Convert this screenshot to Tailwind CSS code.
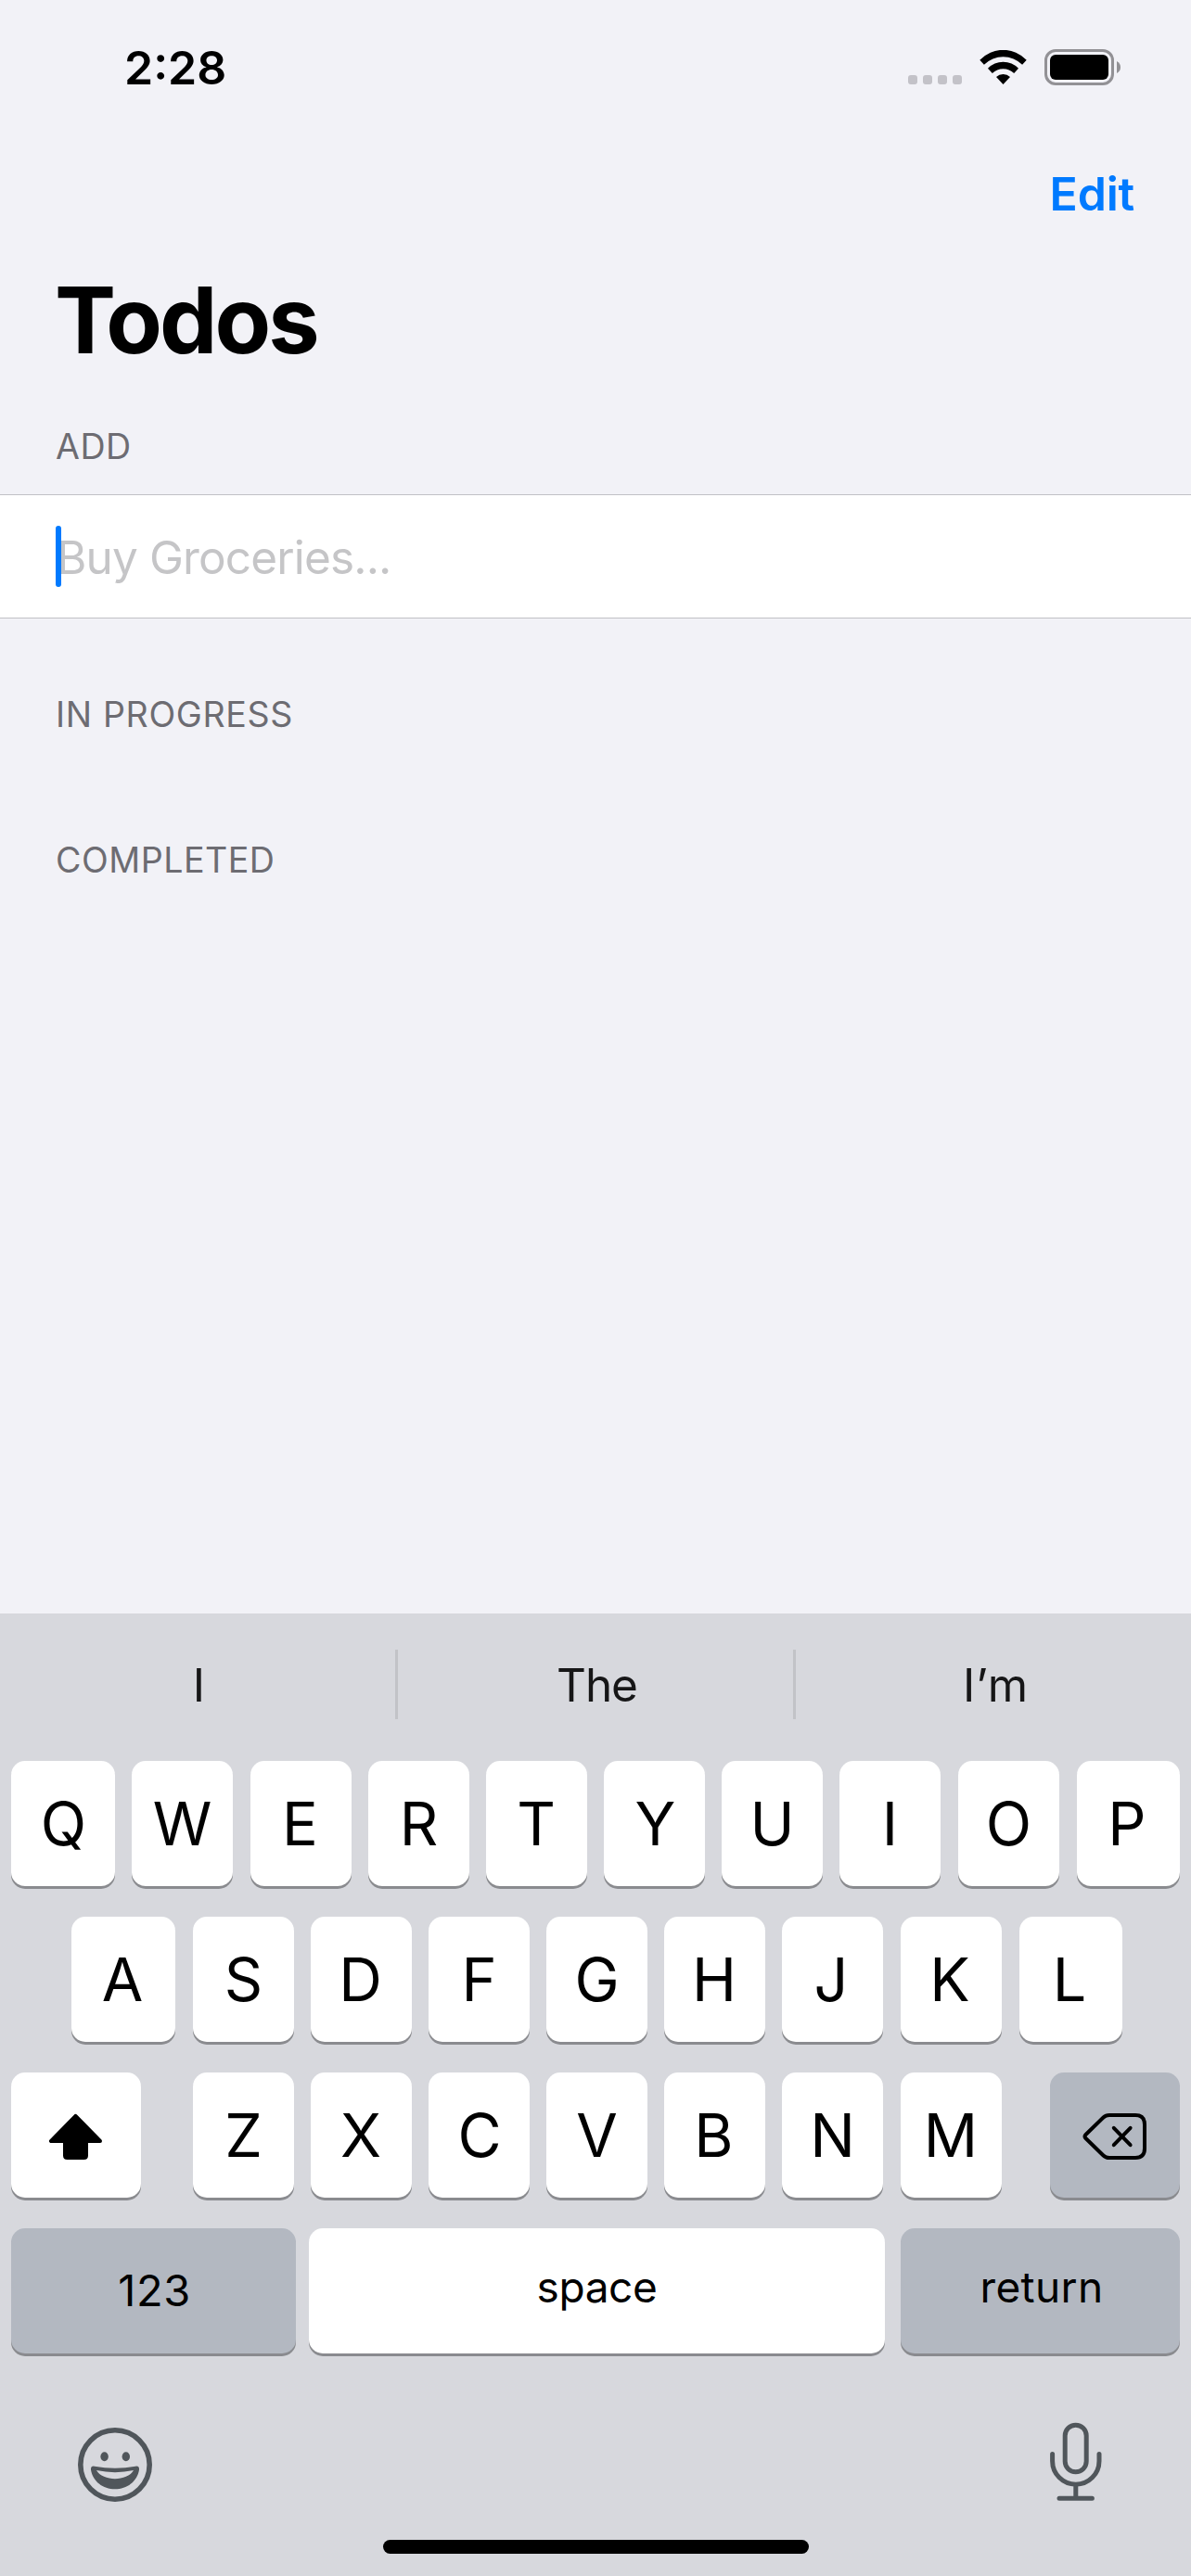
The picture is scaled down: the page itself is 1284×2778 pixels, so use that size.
<!DOCTYPE html>
<html lang="en">
<head>
<meta charset="utf-8">
<title>Todos</title>
<script src="https://cdn.jsdelivr.net/npm/@tailwindcss/browser@4"></script>
</head>
<body class="font-['Inter','Liberation_Sans',sans-serif] bg-[#f2f2f7] text-black">
<div class="flex h-[2778px] w-[1284px] flex-col overflow-hidden bg-[#f2f2f7]">

  <!-- Status bar -->
  <header class="flex h-[145px] items-center justify-between pl-[134px] pr-[76px]">
    <span class="text-[50px] leading-none font-semibold">2:28</span>
    <div class="flex items-start">
      <div class="mt-[28px] flex gap-[6px]">
        <i class="size-[10px] rounded-[3px] bg-[#c3c2c8]"></i>
        <i class="size-[10px] rounded-[3px] bg-[#c3c2c8]"></i>
        <i class="size-[10px] rounded-[3px] bg-[#c3c2c8]"></i>
        <i class="size-[10px] rounded-[3px] bg-[#c3c2c8]"></i>
      </div>
      <svg class="mt-px ml-[19px] h-[37px] w-[51px]" viewBox="0 0 51 37">
        <path d="M.3 10.8A34.4 34.4 0 0 1 50.7 10.8L46.1 15.8A29 29 0 0 0 4.9 15.8Z"/>
        <path d="M9 19.8A22.8 22.8 0 0 1 42 19.8L37.2 25A17 17 0 0 0 13.8 25Z"/>
        <path d="M18 29A11 11 0 0 1 33 29L25.5 37Z"/>
      </svg>
      <div class="ml-[19px] h-[39px] w-[75px] rounded-[12px] border-3 border-[#929195] p-[3px]">
        <div class="h-full w-full rounded-[6px] bg-black"></div>
      </div>
      <svg class="mt-[13px] ml-[3px] h-[13px] w-[4px]" viewBox="0 0 4 13"><path fill="#929195" d="M0 0Q4 2.2 4 6.5T0 13Z"/></svg>
    </div>
  </header>

  <!-- Navigation bar -->
  <nav class="flex h-[126px] items-center justify-end pt-px pr-[61px]">
    <button class="text-[50px] leading-none font-semibold tracking-[-0.2px] text-[#007aff]">Edit</button>
  </nav>
  <h1 class="flex h-[148px] items-center pl-[59px] text-[99px] leading-none font-bold tracking-[-3px]">Todos</h1>

  <!-- List sections -->
  <h2 class="flex h-[114px] items-center pt-[12px] pl-[60px] text-[37.6px] leading-none tracking-[0.5px] text-[#6d6c72]">ADD</h2>
  <div class="relative flex h-[134px] items-center border-y border-[#c1c1c5] bg-white pt-[4px] pl-[61px]">
    <span class="text-[49.5px] leading-none tracking-[-0.85px] text-[#c5c5c7]">Buy Groceries...</span>
    <div class="absolute top-[33px] left-[60px] h-[66px] w-[6px] rounded-full bg-[#007aff]"></div>
  </div>
  <h2 class="flex h-[206px] items-center pt-[2px] pl-[60px] text-[37.6px] leading-none tracking-[0.65px] text-[#6d6c72]">IN PROGRESS</h2>
  <h2 class="flex h-[109px] items-center pl-[60px] text-[37.6px] leading-none tracking-[0.5px] text-[#6d6c72]">COMPLETED</h2>

  <!-- Keyboard -->
  <section class="mt-auto flex h-[1038px] flex-col bg-[#d7d8dd]">
    <div class="flex h-[153px] items-center text-[49.5px] leading-none text-[#161617]">
      <span class="w-[426px] pt-[2px] pl-[3px] text-center">I</span>
      <i class="h-[75px] w-[3px] bg-[#c2c3c7]"></i>
      <span class="w-[426px] pt-[2px] pl-[3px] text-center tracking-[-1.1px]">The</span>
      <i class="h-[75px] w-[3px] bg-[#c2c3c7]"></i>
      <span class="w-[426px] pt-[2px] pl-[5px] text-center tracking-[0.9px]">I’m</span>
    </div>

    <div class="mt-[6px] flex flex-col gap-[33px] px-[12px] text-[64.6px] leading-none">
      <div class="flex gap-[18px] [&>div]:pt-[2px]">
        <div class="flex h-[135px] w-[112px] items-center justify-center rounded-[15px] bg-white pl-px shadow-[0_3px_0_#8a8b8f]">Q</div>
        <div class="flex h-[135px] w-[109px] items-center justify-center rounded-[15px] bg-white shadow-[0_3px_0_#8a8b8f]">W</div>
        <div class="ml-px flex h-[135px] w-[109px] items-center justify-center rounded-[15px] bg-white pr-[2px] shadow-[0_3px_0_#8a8b8f]">E</div>
        <div class="flex h-[135px] w-[109px] items-center justify-center rounded-[15px] bg-white shadow-[0_3px_0_#8a8b8f]">R</div>
        <div class="flex h-[135px] w-[109px] items-center justify-center rounded-[15px] bg-white pr-px shadow-[0_3px_0_#8a8b8f]">T</div>
        <div class="flex h-[135px] w-[109px] items-center justify-center rounded-[15px] bg-white pl-[2px] shadow-[0_3px_0_#8a8b8f]">Y</div>
        <div class="flex h-[135px] w-[109px] items-center justify-center rounded-[15px] bg-white shadow-[0_3px_0_#8a8b8f]">U</div>
        <div class="flex h-[135px] w-[109px] items-center justify-center rounded-[15px] bg-white shadow-[0_3px_0_#8a8b8f]">I</div>
        <div class="ml-px flex h-[135px] w-[109px] items-center justify-center rounded-[15px] bg-white shadow-[0_3px_0_#8a8b8f]">O</div>
        <div class="ml-px flex h-[135px] w-[111px] items-center justify-center rounded-[15px] bg-white pr-[3px] shadow-[0_3px_0_#8a8b8f]">P</div>
      </div>

      <div class="flex gap-[18px] pl-[65px] [&>div]:pt-[2px]">
        <div class="flex h-[135px] w-[112px] items-center justify-center rounded-[15px] bg-white pr-[2px] shadow-[0_3px_0_#8a8b8f]">A</div>
        <div class="ml-px flex h-[135px] w-[109px] items-center justify-center rounded-[15px] bg-white shadow-[0_3px_0_#8a8b8f]">S</div>
        <div class="flex h-[135px] w-[109px] items-center justify-center rounded-[15px] bg-white pr-[2px] shadow-[0_3px_0_#8a8b8f]">D</div>
        <div class="flex h-[135px] w-[109px] items-center justify-center rounded-[15px] bg-white shadow-[0_3px_0_#8a8b8f]">F</div>
        <div class="flex h-[135px] w-[109px] items-center justify-center rounded-[15px] bg-white shadow-[0_3px_0_#8a8b8f]">G</div>
        <div class="flex h-[135px] w-[109px] items-center justify-center rounded-[15px] bg-white pr-px shadow-[0_3px_0_#8a8b8f]">H</div>
        <div class="flex h-[135px] w-[109px] items-center justify-center rounded-[15px] bg-white pr-[3px] shadow-[0_3px_0_#8a8b8f]">J</div>
        <div class="ml-px flex h-[135px] w-[109px] items-center justify-center rounded-[15px] bg-white pr-[3px] shadow-[0_3px_0_#8a8b8f]">K</div>
        <div class="ml-px flex h-[135px] w-[111px] items-center justify-center rounded-[15px] bg-white pr-[3px] shadow-[0_3px_0_#8a8b8f]">L</div>
      </div>

      <div class="flex justify-between">
        <div class="flex h-[135px] w-[140px] items-center justify-center rounded-[15px] bg-white shadow-[0_3px_0_#8a8b8f]">
          <svg class="mt-[3px] h-[52px] w-[60px]" viewBox="0 0 60 52"><path stroke="#000" stroke-width="4" stroke-linejoin="round" d="M29.5 3.8L3 31H18V46.5Q18 49 20.5 49H38.5Q41 49 41 46.5V31H56Z"/></svg>
        </div>
        <div class="ml-[4px] flex gap-[18px] [&>div]:pt-[2px]">
          <div class="flex h-[135px] w-[109px] items-center justify-center rounded-[15px] bg-white shadow-[0_3px_0_#8a8b8f]">Z</div>
          <div class="flex h-[135px] w-[109px] items-center justify-center rounded-[15px] bg-white pr-px shadow-[0_3px_0_#8a8b8f]">X</div>
          <div class="flex h-[135px] w-[109px] items-center justify-center rounded-[15px] bg-white pl-px shadow-[0_3px_0_#8a8b8f]">C</div>
          <div class="flex h-[135px] w-[109px] items-center justify-center rounded-[15px] bg-white shadow-[0_3px_0_#8a8b8f]">V</div>
          <div class="flex h-[135px] w-[109px] items-center justify-center rounded-[15px] bg-white pr-[2px] shadow-[0_3px_0_#8a8b8f]">B</div>
          <div class="flex h-[135px] w-[109px] items-center justify-center rounded-[15px] bg-white shadow-[0_3px_0_#8a8b8f]">N</div>
          <div class="ml-px flex h-[135px] w-[109px] items-center justify-center rounded-[15px] bg-white pr-px shadow-[0_3px_0_#8a8b8f]">M</div>
        </div>
        <div class="flex h-[135px] w-[140px] items-center justify-center rounded-[15px] bg-[#b3b8c1] shadow-[0_3px_0_#8a8b8f]">
          <svg class="mt-[3px] h-[52px] w-[72px]" viewBox="0 0 72 52" fill="none" stroke="#000" stroke-width="4" stroke-linecap="round" stroke-linejoin="round">
            <path d="M30 3H58Q68 3 68 13V39Q68 49 58 49H30Q26 49 23.5 46.5L4.5 28Q2.6 26 4.5 24L23.5 5.5Q26 3 30 3Z"/>
            <path d="M34.8 16.8L52.6 35.2M52.6 16.8L34.8 35.2"/>
          </svg>
        </div>
      </div>

      <div class="flex text-[46px]">
        <div class="flex h-[135px] w-[307px] items-center justify-center rounded-[15px] bg-[#b3b8c1] pb-[2px] pl-[2px] text-[47px] tracking-[0.6px] shadow-[0_3px_0_#8a8b8f]">123</div>
        <div class="ml-[14px] flex h-[135px] w-[621px] items-center justify-center rounded-[15px] bg-white pb-[10px] tracking-[-0.4px] shadow-[0_3px_0_#8a8b8f]">space</div>
        <div class="ml-[17px] flex h-[135px] w-[301px] items-center justify-center rounded-[15px] bg-[#b3b8c1] pb-[10px] pl-[3px] tracking-[0.37px] shadow-[0_3px_0_#8a8b8f]">return</div>
      </div>
    </div>

    <div class="mt-[74px] flex items-start justify-between pr-[96px] pl-[84px]">
      <svg class="mt-[6px] size-[80px]" viewBox="0 0 80 80" fill="#50565b">
        <circle cx="40" cy="40" r="37.2" fill="none" stroke="#50565b" stroke-width="5.6"/>
        <ellipse cx="28.6" cy="31.3" rx="4.2" ry="5"/>
        <ellipse cx="51.8" cy="31.3" rx="4.2" ry="5"/>
        <path fill-rule="evenodd" d="M18 41.7Q40 46 62 41.7Q66.5 41 66 45.5C64 58 53 66.3 40 66.3C27 66.3 16 58 14 45.5Q13.5 41 18 41.7ZM20 46C23 52 32 55.2 40 55.2C48 55.2 57 52 60 46Q40 50.3 20 46Z"/>
      </svg>
      <svg class="h-[86px] w-[56px]" viewBox="0 0 56 86" fill="none" stroke="#50565b" stroke-width="5" stroke-linecap="round">
        <rect x="16.2" y="3.2" width="23" height="50.6" rx="11.5"/>
        <path d="M2.6 34.5V42A25.2 25.2 0 0 0 53 42V34.5M27.8 67.5V82M10 82.3H45.4"/>
      </svg>
    </div>

    <!-- Home indicator -->
    <div class="mt-[41px] ml-[413px] h-[15px] w-[459px] rounded-full bg-black"></div>
  </section>
</div>
</body>
</html>
